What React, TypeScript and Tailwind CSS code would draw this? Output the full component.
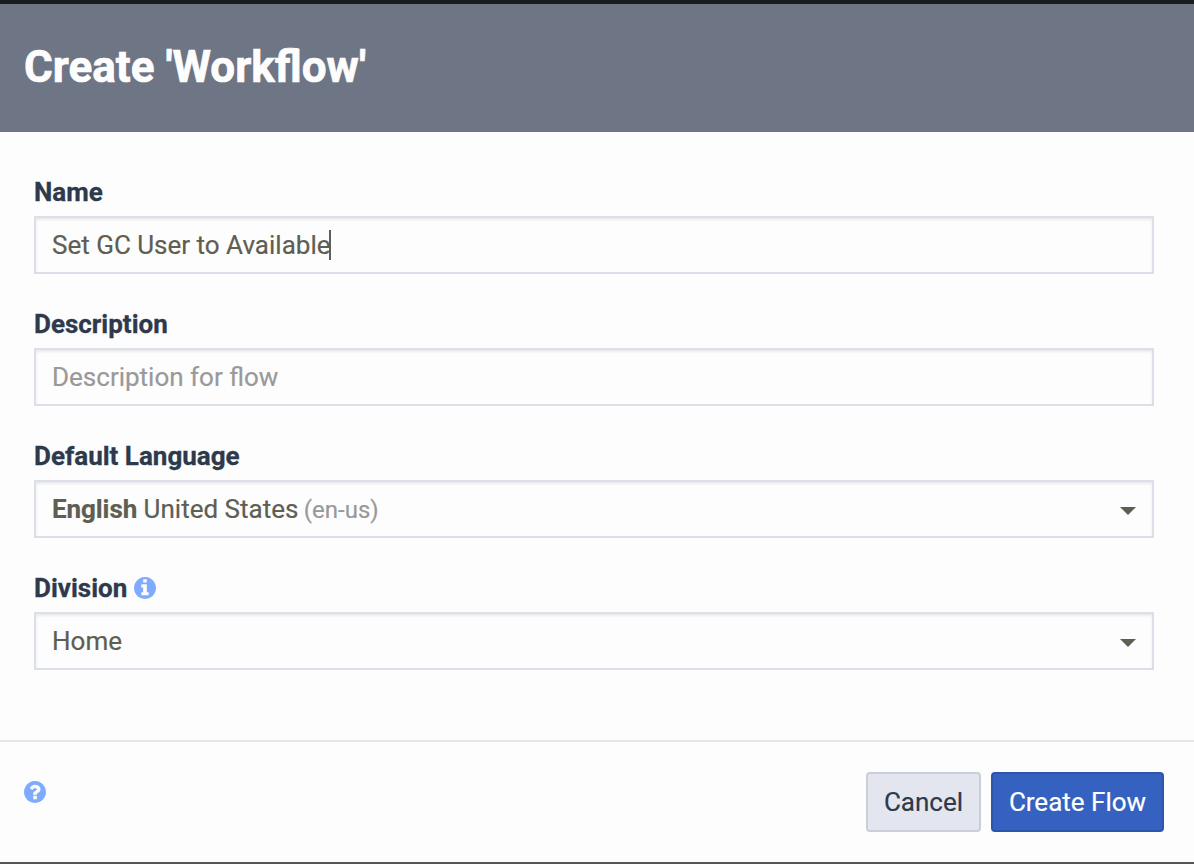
import React from "react";

function InfoIcon() {
  return (
    <svg viewBox="128 128 1536 1536" className="size-[22px] shrink-0 fill-[#7fabff]" aria-hidden="true">
      <path d="M1152 1376v-160q0-14-9-23t-23-9h-96v-512q0-14-9-23t-23-9h-320q-14 0-23 9t-9 23v160q0 14 9 23t23 9h96v320h-96q-14 0-23 9t-9 23v160q0 14 9 23t23 9h448q14 0 23-9t9-23zm-128-896v-160q0-14-9-23t-23-9h-192q-14 0-23 9t-9 23v160q0 14 9 23t23 9h192q14 0 23-9t9-23zm640 416q0 209-103 385.5t-279.5 279.5-385.5 103-385.5-103-279.5-279.5-103-385.5 103-385.5 279.5-279.5 385.5-103 385.5 103 279.5 279.5 103 385.5z" />
    </svg>
  );
}

function HelpIcon() {
  return (
    <svg viewBox="128 128 1536 1536" className="size-[22px] shrink-0 fill-[#7fabff]" aria-hidden="true">
      <path d="M1024 1376v-192q0-14-9-23t-23-9h-192q-14 0-23 9t-9 23v192q0 14 9 23t23 9h192q14 0 23-9t9-23zm256-672q0-88-55.5-163t-138.5-116-170-41q-243 0-371 213-15 24 8 42l132 100q7 6 19 6 16 0 25-12 53-68 86-92 34-24 86-24 48 0 85.5 26t37.5 59q0 38-20 61t-68 45q-63 28-115.5 86.5t-52.5 125.5v36q0 14 9 23t23 9h192q14 0 23-9t9-23q0-19 21.5-49.5t54.5-49.5q32-18 49-28.5t46-35 44.5-48 28-60.5 12.5-81zm384 192q0 209-103 385.5t-279.5 279.5-385.5 103-385.5-103-279.5-279.5-103-385.5 103-385.5 279.5-279.5 385.5-103 385.5 103 279.5 279.5 103 385.5z" />
    </svg>
  );
}

function Caret() {
  return (
    <svg viewBox="0 0 16 8" className="ml-auto mt-1 h-2 w-4 shrink-0 fill-[#5e5e52]" aria-hidden="true">
      <path d="M0 0h16L8 8z" />
    </svg>
  );
}

function Field({ label, icon, children }: { label: string; icon?: React.ReactNode; children: React.ReactNode }) {
  return (
    <div className="flex flex-col">
      <div className="flex h-12 items-center gap-[7px] font-bold text-[#2e394c] [-webkit-text-stroke:0.3px]">
        <span>{label}</span>
        {icon}
      </div>
      <div className="flex h-[58px] items-center border-2 border-[#dbe0e8] px-4 text-[#5e5e52] shadow-[inset_0_2px_3px_rgba(0,0,0,0.08)] [-webkit-text-stroke:0.2px]">
        {children}
      </div>
    </div>
  );
}

export default function App() {
  return (
    <div className="flex h-[864px] w-[1194px] flex-col border-t-4 border-b-2 border-t-[#191c1f] border-b-[#555555] bg-[#fdfdfd] font-['Roboto',sans-serif] text-[26px] leading-[30px]">
      <header className="flex h-32 items-center bg-[#6e7584] px-6 pb-0.5">
        <h1 className="text-[44px] leading-[52px] font-bold text-[#fdfdfd] [-webkit-text-stroke:0.7px]">
          Create 'Workflow'
        </h1>
      </header>
      <main className="flex flex-1 flex-col gap-[26px] pt-9 pr-10 pl-[34px]">
        <Field label="Name">
          <span>Set GC User to Available</span>
          <span className="-ml-px h-[30px] w-0.5 bg-[#5e5e52]" />
        </Field>
        <Field label="Description">
          <span className="text-[#999999]">Description for flow</span>
        </Field>
        <Field label="Default Language">
          <span className="whitespace-pre">
            <b className="tracking-[-0.08px]">English</b> United States{" "}
            <span className="-ml-px text-2xl leading-none text-[#999999]">(en-us)</span>
          </span>
          <Caret />
        </Field>
        <Field label="Division" icon={<InfoIcon />}>
          <span>Home</span>
          <Caret />
        </Field>
      </main>
      <footer className="flex h-[122px] items-start border-t-2 border-[#e5e5e5] pt-[30px] pr-[30px] pl-6">
        <div className="pt-[9px]">
          <HelpIcon />
        </div>
        <div className="ml-auto flex gap-2.5 [-webkit-text-stroke:0.2px]">
          <button className="h-[60px] w-[115px] rounded border-2 border-[#c8cfda] bg-[#e3e6ee] text-[#2e394c]">
            Cancel
          </button>
          <button className="h-[60px] w-[173px] rounded border-2 border-[#2d55a9] bg-[#3561c1] whitespace-nowrap text-white">
            Create Flow
          </button>
        </div>
      </footer>
    </div>
  );
}
